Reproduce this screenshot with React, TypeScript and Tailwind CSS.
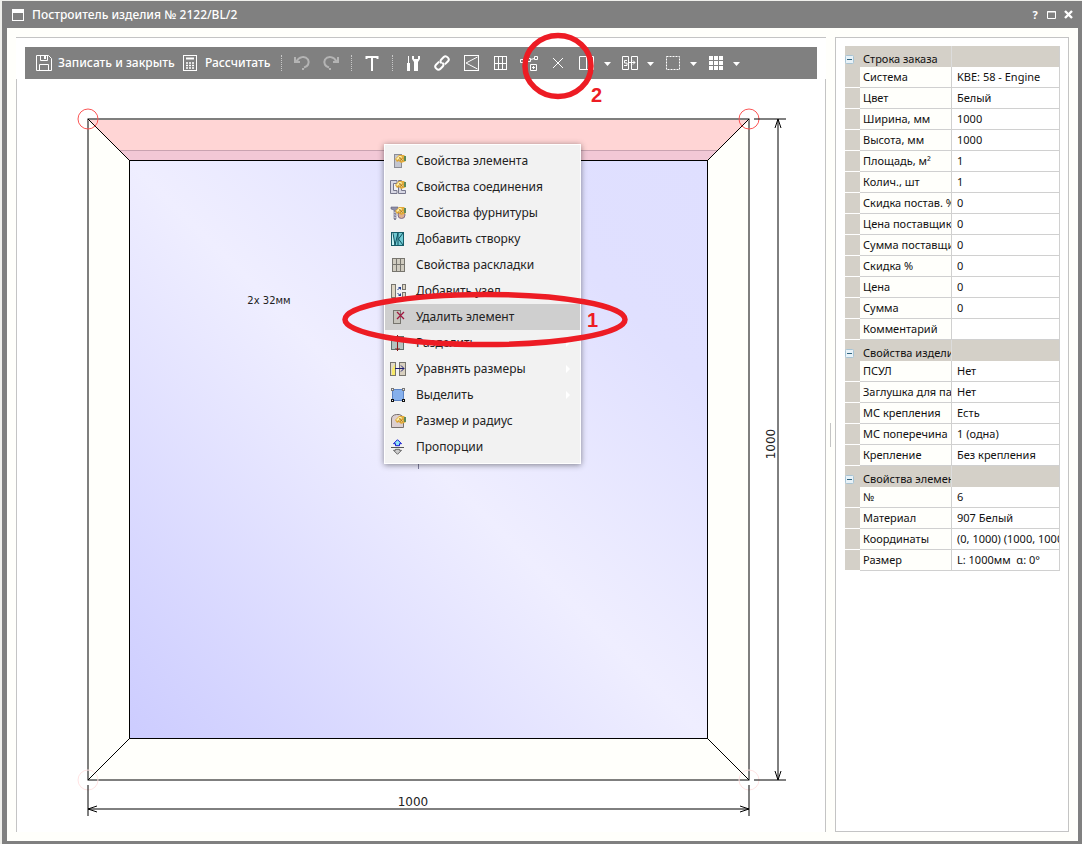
import React, { useState } from 'react';

type Row = [string, string];

interface Section {
  title: string;
  rows: Row[];
}

const sections: Section[] = [
  {
    title: 'Строка заказа',
    rows: [
      ['Система', 'KBE: 58 - Engine'],
      ['Цвет', 'Белый'],
      ['Ширина, мм', '1000'],
      ['Высота, мм', '1000'],
      ['Площадь, м²', '1'],
      ['Колич., шт', '1'],
      ['Скидка постав. %', '0'],
      ['Цена поставщик', '0'],
      ['Сумма поставщи', '0'],
      ['Скидка %', '0'],
      ['Цена', '0'],
      ['Сумма', '0'],
      ['Комментарий', ''],
    ],
  },
  {
    title: 'Свойства издели',
    rows: [
      ['ПСУЛ', 'Нет'],
      ['Заглушка для па', 'Нет'],
      ['МС крепления', 'Есть'],
      ['МС поперечина', '1 (одна)'],
      ['Крепление', 'Без крепления'],
    ],
  },
  {
    title: 'Свойства элемен',
    rows: [
      ['№', '6'],
      ['Материал', '907 Белый'],
      ['Координаты', '(0, 1000) (1000, 1000'],
      ['Размер', 'L: 1000мм  α: 0°'],
    ],
  },
];

// Gold hand used by all the "properties" icons
const Hand = () => (
  <>
    <path d="M5 6l4-4h5l2 2v4l-2 1-3 1-2-2-2 1z" fill="#e3ac3c" />
    <path d="M6 6l3-3h3l-4 4z" fill="#fff0a8" />
    <path d="M9 7l3-3M11 8l2-2" stroke="#fff0a8" />
    <path d="M8 7.500l3-3M10 8.500l3-3M9 4l3.500 3.500" stroke="#96641e" strokeWidth="0.6" />
    <path d="M14 3h2v5h-2z" fill="#5f8a58" />
  </>
);

const menuItems: { label: string; icon: React.ReactNode; submenu?: boolean }[] = [
  {
    label: 'Свойства элемента',
    icon: (
      <>
        <rect x="4.500" y="1.500" width="7" height="13" fill="#c4c6d0" stroke="#8b8d96" />
        <Hand />
      </>
    ),
  },
  {
    label: 'Свойства соединения',
    icon: (
      <>
        <path d="M7 1.500H.5v13H7v-3H3.500v-7H7z" fill="#d8d8e4" stroke="#77778c" />
        <path d="M15.500 14.500h-7v-13h3v10h4z" fill="#d8d8e4" stroke="#77778c" />
        <Hand />
      </>
    ),
  },
  {
    label: 'Свойства фурнитуры',
    icon: (
      <>
        <path d="M1 2h7v3H6v9l-1 1-1-1V5L1 4z" fill="#8d8da6" stroke="#5f5f78" strokeWidth="0.6" />
        <path d="M3.500 7l3 1M3.500 9.500l3 1M3.500 12l3 1" stroke="#c8c8dc" />
        <circle cx="11.500" cy="10" r="3.500" fill="#e0b090" stroke="#7d6a8a" />
        <Hand />
      </>
    ),
  },
  {
    label: 'Добавить створку',
    icon: (
      <>
        <rect x="1.500" y="1.500" width="12" height="13" fill="#6fc9d2" stroke="#165c68" />
        <path d="M2 2h2v12H2z" fill="#c8f4f5" />
        <path d="M3 2l2 12 3-12v12M13 2L8.500 8l4.500 6" stroke="#0e4f5c" fill="none" />
      </>
    ),
  },
  {
    label: 'Свойства раскладки',
    icon: (
      <>
        <rect x="2.500" y="1.500" width="12" height="13" fill="#d0ccc0" stroke="#77756e" />
        <path d="M6.500 1v14M10.500 1v14M2 7.500h13" stroke="#77756e" />
      </>
    ),
  },
  {
    label: 'Добавить узел',
    icon: (
      <>
        <rect x="1.500" y="1.500" width="4" height="13" fill="#ded6c4" stroke="#77756e" />
        <rect x="12.500" y="1.500" width="3" height="5" fill="#ded6c4" stroke="#77756e" />
        <rect x="12.500" y="9.500" width="3" height="5" fill="#ded6c4" stroke="#77756e" />
        <path d="M7.500 7l2-2M7.500 10l2 2" stroke="#23408f" />
        <path d="M8 4h3v3zM8 13h3v-3z" fill="#23408f" />
      </>
    ),
  },
  {
    label: 'Удалить элемент',
    icon: (
      <>
        <rect x="3.500" y="1.500" width="7" height="13" fill="#c6c4bc" stroke="#77756e" />
        <path d="M7 3l7 7M14 3l-7 7" stroke="#a01840" strokeWidth="1.300" />
      </>
    ),
  },
  {
    label: 'Разделить',
    submenu: true,
    icon: (
      <>
        <rect x="1.500" y="1.500" width="12" height="13" fill="#b4c4c0" stroke="#5f706c" />
        <path d="M7.500 0v16M5.500 3l2-2 2 2M5.500 13l2 2 2-2" stroke="#8b1a1a" fill="none" />
      </>
    ),
  },
  {
    label: 'Уравнять размеры',
    submenu: true,
    icon: (
      <>
        <rect x=".5" y="1.500" width="5" height="13" fill="#e2dac8" stroke="#77756e" />
        <path d="M2 14V8l3-5v11z" fill="#f8ea6a" />
        <rect x="9.500" y="1.500" width="6" height="13" fill="#d8d0c0" stroke="#77756e" />
        <path d="M5 7.500h9M11 4.500l3 3-3 3" stroke="#1c1c70" fill="none" />
      </>
    ),
  },
  {
    label: 'Выделить',
    submenu: true,
    icon: (
      <>
        <rect x="2.500" y="2.500" width="11" height="11" fill="#86b0ec" stroke="#5b83c4" />
        <path d="M1 1h3v3H1zM12 1h3v3h-3z" fill="#777" />
        <path d="M1 12h3v3H1zM12 12h3v3h-3z" fill="#111" />
        <path d="M2 2h1v1H2zM13 2h1v1h-1zM2 13h1v1H2zM13 13h1v1h-1z" fill="#eee" />
      </>
    ),
  },
  {
    label: 'Размер и радиус',
    icon: (
      <>
        <path d="M1.500 14.500V6q0-4 5-4.500h3q4 1 4 5v8z" fill="#dccfd0" stroke="#77706e" />
        <g transform="translate(0 1)">
          <Hand />
        </g>
      </>
    ),
  },
  {
    label: 'Пропорции',
    icon: (
      <>
        <path d="M7.500 .7l4 4h-2v2h-4v-2h-2z" fill="#8fe4f5" stroke="#1515d0" />
        <path d="M1 8.500h13" stroke="#555" />
        <path d="M7.500 15.300l4-4h-2v-1h-4v1h-2z" fill="#ccc" stroke="#666" />
      </>
    ),
  },
];

const Caret = () => (
  <svg className="w-[7px] h-[4px] mt-[2px]" viewBox="0 0 7 4">
    <path d="M0 0h7L3.500 4z" fill="#fff" />
  </svg>
);

const Separator = () => <span className="h-4 border-l border-dotted border-[#c8c8c8]" />;

interface ToolProps {
  label: string;
  children: React.ReactNode;
  className?: string;
}

const Tool = ({ label, children, className = 'w-[29px]' }: ToolProps) => (
  <button type="button" aria-label={label} className={`${className} h-full flex items-center justify-center shrink-0`}>
    <svg className="w-[18px] h-[18px]" viewBox="0 0 18 18" fill="none" stroke="#fff">
      {children}
    </svg>
  </button>
);

const MenuTool = ({ label, children }: ToolProps) => (
  <button type="button" aria-label={label} className="w-[43px] h-full flex items-center gap-2 shrink-0">
    <svg className="w-[18px] h-[18px]" viewBox="0 0 18 18" fill="none" stroke="#fff">
      {children}
    </svg>
    <Caret />
  </button>
);

const Toolbar = () => (
  <div className="flex items-center h-8 mx-[9px] pl-[11px] bg-[#808080] text-white text-[12px] font-medium overflow-hidden">
    <button type="button" className="flex items-center gap-[6px] w-[147px] shrink-0 whitespace-nowrap">
      <svg className="w-4 h-4 shrink-0" viewBox="0 0 16 16" fill="none" stroke="#fff">
        <path d="M.5 .5h12l3 3v12H.5z" />
        <path d="M4.500 .5v5h7v-5M3.500 15.500v-6h9v6" />
        <path d="M8 1h2v3H8z" fill="#fff" stroke="none" />
      </svg>
      Записать и закрыть
    </button>
    <button type="button" className="flex items-center gap-2 w-[98px] shrink-0 whitespace-nowrap">
      <svg className="w-[14px] h-4 shrink-0" viewBox="0 0 14 16" fill="none" stroke="#fff">
        <rect x=".5" y=".5" width="13" height="15" />
        <path d="M3 3.500h8" strokeWidth="2" />
        <path d="M3 8h2M6 8h2M9 8h2M3 10.500h2M6 10.500h2M9 10.500h2M3 13h2M6 13h2M9 13h2" strokeWidth="1.400" />
      </svg>
      Рассчитать
    </button>
    <Separator />
    <div className="flex h-full pl-[5px] pr-[6px]">
      <Tool label="Отменить">
        <g stroke="#b4b4b4" strokeWidth="2">
          <path d="M1 8h6M2 8V3M3.500 7.500C6 2.500 12 1.500 15 5.500c2 4-.5 7-4 8" />
          <path d="M9 15h2" />
        </g>
      </Tool>
      <Tool label="Повторить">
        <g stroke="#b4b4b4" strokeWidth="2">
          <path d="M17 8h-6M16 8V3M14.500 7.500C12 2.500 6 1.500 3 5.500c-2 4 .5 7 4 8" />
          <path d="M9 15H7" />
        </g>
      </Tool>
    </div>
    <Separator />
    <Tool label="Текст" className="w-[40px]">
      <path d="M3 3h12M9 2v15M3.500 2v3M14.500 2v3" strokeWidth="2" />
    </Tool>
    <Separator />
    <div className="flex h-full pl-[5px]">
      <Tool label="Инструменты">
        <path d="M4.500 2v7" strokeWidth="1" />
        <path d="M4.500 9v8" strokeWidth="3" />
        <path d="M8 2v3l2 3v9h4V8l2-3V2h-2v3h-4V2z" fill="#fff" stroke="none" />
      </Tool>
      <Tool label="Соединение">
        <g strokeWidth="2" transform="rotate(-45 9 9)">
          <path d="M8 6H3.500q-2.500 0-2.500 3t2.500 3H7q2.500 0 2.500-3" />
          <path d="M10 12h4.500q2.500 0 2.500-3t-2.500-3H11Q8.500 6 8.500 9" />
        </g>
      </Tool>
      <Tool label="Створка">
        <rect x="2.500" y="1.500" width="14" height="15" />
        <path d="M15.500 3L4 9l11.500 6" />
      </Tool>
      <Tool label="Раскладка">
        <rect x="3.500" y="2.500" width="12" height="13" />
        <path d="M7.500 2v14M11.500 2v14M3 9.500h13" />
      </Tool>
      <Tool label="Добавить узел">
        <path d="M.5 5.500h3v3h-3zM14.500 2.500h3v3h-3zM7.500 4.500h3v3h-3z" />
        <path d="M3.500 6.500h4M10.500 5.500l4-1" />
        <path d="M10.500 10.500h6v6h-6zM13.500 12v3M12 13.500h3" />
      </Tool>
      <Tool label="Удалить элемент">
        <path d="M4 4l10 10M14 4L4 14" />
      </Tool>
    </div>
    <div className="flex h-full pl-[6px]">
      <MenuTool label="Разделить">
        <path d="M1.500 2.500h14v13h-14zM8.500 2v14" />
      </MenuTool>
      <MenuTool label="Уравнять размеры">
        <path d="M1.500 2.500h6v13h-6zM10.500 2.500h6v13h-6z" />
        <path d="M6 6.500H3.500V9H6v2.500H3M7 8.500h7M12 6.500l2 2-2 2" />
      </MenuTool>
      <MenuTool label="Выделить">
        <rect x="2.500" y="2.500" width="13" height="13" strokeDasharray="2 1" />
      </MenuTool>
      <MenuTool label="Сетка">
        <path d="M2 4h14M2 9h14M2 14h14" strokeWidth="4" strokeDasharray="4 1" />
      </MenuTool>
    </div>
  </div>
);

const ContextMenu = () => (
  <ul className="absolute left-[367px] top-[65px] w-[197px] py-[3px] bg-[#f2f2f2] border border-white shadow-[0_1px_6px_rgba(0,0,0,0.45)] text-[12px] text-[#222]">
    {menuItems.map((item) => (
      <li key={item.label}>
        <button
          type="button"
          className={`w-full h-[26px] pl-[5px] pr-[10px] flex items-center gap-[10px] text-left whitespace-nowrap ${
            item.label === 'Удалить элемент' ? 'bg-[#cfcfcf]' : ''
          }`}
        >
          <svg className="w-4 h-4 shrink-0" viewBox="0 0 16 16" fill="none">
            {item.icon}
          </svg>
          <span className="flex-1">{item.label}</span>
          {item.submenu && (
            <svg className="w-1 h-2 shrink-0" viewBox="0 0 4 8">
              <path d="M0 0l4 4-4 4z" fill="#fff" />
            </svg>
          )}
        </button>
      </li>
    ))}
  </ul>
);

const Drawing = () => (
  <svg className="block w-full h-auto" viewBox="0 0 808 752" fill="none">
    <defs>
      <linearGradient id="glass" x1="0" y1="1" x2="1" y2="0">
        <stop offset="0" stopColor="#ccccff" />
        <stop offset="0.500" stopColor="#efeeff" />
        <stop offset="0.800" stopColor="#e0e0ff" />
        <stop offset="1" stopColor="#dfdfff" />
      </linearGradient>
    </defs>
    <rect x="71" y="40" width="661" height="661" fill="#fffffb" stroke="#000" />
    <rect x="112.500" y="81.500" width="578" height="578" fill="url(#glass)" />
    <path d="M71 41h661l-41 40H112z" fill="#ffd5d5" />
    <path d="M102 71h599l-10 10H112z" fill="#f2c8d6" />
    <path d="M102 71.500h599" stroke="#c9a3b1" />
    <rect x="112.500" y="81.500" width="578" height="578" stroke="#000" />
    <path d="M71 40l41.500 41.500M732 40l-41.500 41.500M71 701l41.500-41.500M732 701l-41.500-41.500" stroke="#000" />
    <circle cx="71" cy="40" r="10" stroke="#fb5555" />
    <circle cx="732" cy="40" r="10" stroke="#fb5555" />
    <circle cx="71" cy="701" r="10" stroke="#ffe4e4" />
    <circle cx="732" cy="701" r="10" stroke="#ffe4e4" />
    <g stroke="#000">
      <path d="M71 706v31M732 706v31M71 730h661M737 40h32M737 701h32M761 40v661" />
      <path d="M80 727l-9 3 9 3M723 727l9 3-9 3M758 49l3-9 3 9M758 692l3 9 3-9" />
    </g>
    <path d="M401.500 385v5" stroke="#8080a0" />
    <g fill="#222" fontFamily="DejaVu Sans, sans-serif" textAnchor="middle">
      <text x="396" y="727" fontSize="12">1000</text>
      <text x="758" y="365" fontSize="12" transform="rotate(-90 758 365)">1000</text>
      <text x="252" y="225" fontSize="10">2x 32мм</text>
    </g>
  </svg>
);

const PropertyGrid = () => {
  const [closed, setClosed] = useState<string[]>([]);

  const toggle = (title: string) => {
    setClosed((prev) => (prev.includes(title) ? prev.filter((t) => t !== title) : [...prev, title]));
  };

  return (
    <table className="w-full table-fixed border-separate border-spacing-0 text-[11px] leading-4 text-[#111]">
      <colgroup>
        <col className="w-[15px]" />
        <col className="w-[92px]" />
        <col />
      </colgroup>
      {sections.map((section) => (
        <tbody key={section.title}>
          <tr className="h-[21px] bg-[#d4d0c8]">
            <th className="p-0 pt-[5px]">
              <button
                type="button"
                aria-label={section.title}
                aria-expanded={!closed.includes(section.title)}
                onClick={() => toggle(section.title)}
                className="block"
              >
                <svg className="w-[9px] h-[9px]" viewBox="0 0 9 9">
                  <rect x=".5" y=".5" width="8" height="8" rx="1" fill="#e8f2f8" stroke="#a8c4d4" />
                  <path d="M2 4.500h5" stroke="#2f6480" />
                </svg>
              </button>
            </th>
            <th scope="colgroup" className="p-0 pl-[3px] pt-1 font-normal text-left border-r border-[#dcdcdc]">
              <div className="h-4 overflow-hidden whitespace-nowrap">{section.title}</div>
            </th>
            <td className="p-0 border-r border-[#d0d0d0]" />
          </tr>
          {!closed.includes(section.title) &&
            section.rows.map(([name, value]) => (
              <tr key={name} className="h-[21px]">
                <td className="p-0 bg-[#d4d0c8] border-b border-white" />
                <th scope="row" className="p-0 pl-[3px] font-normal text-left bg-[#fffffb] border-r border-b border-[#d0d0d0]">
                  <div className="h-4 overflow-hidden whitespace-nowrap">{name}</div>
                </th>
                <td className="p-0 pl-[5px] border-r border-b border-[#d0d0d0]">
                  <div className="h-4 overflow-hidden whitespace-pre">{value}</div>
                </td>
              </tr>
            ))}
        </tbody>
      ))}
    </table>
  );
};

const App: React.FC = () => {
  return (
    <div className="min-h-screen flex flex-col pt-px pl-[2px] bg-[#f0f0ec] font-['Noto_Sans','Open_Sans',sans-serif]">
      <header className="h-[27px] flex items-center pl-[10px] pr-[9px] bg-[#808080] text-white text-[12px] font-medium">
        <svg className="w-3 h-3 mr-2" viewBox="0 0 12 12" fill="none" stroke="#fff">
          <rect x=".5" y=".5" width="11" height="11" />
          <path d="M0 2h12" strokeWidth="4" />
        </svg>
        <h1 className="flex-1">Построитель изделия № 2122/BL/2</h1>
        <div className="flex items-center gap-2">
          <button type="button" aria-label="Справка" className="w-2 text-[11px] font-bold leading-3">?</button>
          <button type="button" aria-label="Развернуть">
            <svg className="w-[9px] h-2" viewBox="0 0 9 8" fill="none" stroke="#fff">
              <path d="M.5 .5h8v7h-8zM0 1h9" />
            </svg>
          </button>
          <button type="button" aria-label="Закрыть">
            <svg className="w-[9px] h-[9px]" viewBox="0 0 9 9" stroke="#fff">
              <path d="M1 1l7 7M8 1L1 8" strokeWidth="2.400" />
            </svg>
          </button>
        </div>
      </header>

      <div className="flex-1 flex border-l-[5px] border-r-4 border-b-[3px] border-[#808080] bg-[#fffffb] p-[9px]">
        <main className="flex-1 min-w-0 flex flex-col border-t border-[#c4c4c4] bg-white">
          <div className="pt-[9px]">
            <Toolbar />
          </div>
          <div className="relative flex-1 border-x border-[#c4c4c4]">
            <Drawing />
            <ContextMenu />
            {/* Step marks over the menu and the toolbar */}
            <svg className="absolute left-[325px] -top-[47px] w-[287px] h-[317px] pointer-events-none" viewBox="0 0 287 317" fill="none">
              <ellipse cx="216" cy="34" rx="33" ry="30.500" stroke="#ed1c24" strokeWidth="5.500" />
              <ellipse cx="143" cy="287.500" rx="140" ry="25" stroke="#ed1c24" strokeWidth="5.500" />
              <g fill="#ed1c24" fontFamily="Liberation Sans, sans-serif" fontWeight="bold" fontSize="20">
                <text x="249" y="70">2</text>
                <text x="245" y="295">1</text>
              </g>
            </svg>
          </div>
        </main>
        <div className="w-[9px] flex items-center justify-center">
          <span className="h-6 border-l border-[#c4c4c4]" />
        </div>
        <aside className="w-[234px] shrink-0 border border-[#c4c4c4] bg-white pt-2 pl-[9px] pr-2">
          <PropertyGrid />
        </aside>
      </div>
    </div>
  );
};

export default App;
